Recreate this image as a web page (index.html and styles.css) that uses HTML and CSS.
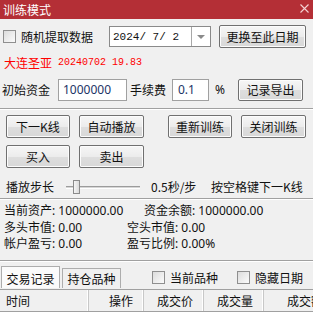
FILE: index.html
```html
<!DOCTYPE html>
<html lang="zh-CN">
<head>
    <meta charset="UTF-8">
    <title>训练模式</title>
    <link rel="stylesheet" href="styles.css">
</head>
<body>
    <div class="window">
        <!-- 标题栏 -->
        <div class="titlebar">
            <span class="title">训练模式</span>
            <svg class="close" width="9" height="9" viewBox="0 0 9 9">
                <path d="M0.5 0.5 L8.5 8.5 M8.5 0.5 L0.5 8.5" stroke="#f4d2d4" stroke-width="1.1" fill="none"/>
            </svg>
        </div>

        <div class="row row-date">
            <label class="check check-wide"><span class="box"></span>随机提取数据</label>
            <div class="combo">
                <span class="combo-text">2024/ 7/ 2</span>
                <span class="combo-arrow"></span>
            </div>
            <button class="btn btn-wide">更换至此日期</button>
        </div>

        <div class="row row-stock">
            <span class="stock-name">大连圣亚</span>
            <span class="stock-info">20240702 19.83</span>
        </div>

        <div class="row row-money">
            <span class="lbl lbl-money">初始资金</span>
            <div class="field field-money">1000000</div>
            <span class="lbl lbl-fee">手续费</span>
            <div class="field field-fee">0.1</div>
            <span class="lbl lbl-pct">%</span>
            <button class="btn btn-export">记录导出</button>
        </div>

        <div class="sep sep-1"></div>

        <div class="row row-btns">
            <button class="btn">下一K线</button>
            <button class="btn">自动播放</button>
            <button class="btn btn-gap">重新训练</button>
            <button class="btn">关闭训练</button>
        </div>
        <div class="row row-btns row-trade">
            <button class="btn">买入</button>
            <button class="btn">卖出</button>
        </div>

        <div class="row row-step">
            <span class="lbl lbl-step">播放步长</span>
            <div class="slider"><span class="track"></span><span class="thumb"></span></div>
            <span class="lbl lbl-speed">0.5秒/步</span>
            <span class="lbl">按空格键下一K线</span>
        </div>

        <div class="sep"></div>

        <div class="info">
            <span>当前资产: 1000000.00</span><span class="info-shift">资金余额: 1000000.00</span>
            <span>多头市值: 0.00</span><span>空头市值: 0.00</span>
            <span>帐户盈亏: 0.00</span><span>盈亏比例: 0.00%</span>
        </div>

        <div class="sep"></div>

        <div class="row row-tabs">
            <div class="tab tab-active">交易记录</div>
            <div class="tab">持仓品种</div>
            <label class="check check-cur"><span class="box"></span>当前品种</label>
            <label class="check"><span class="box"></span>隐藏日期</label>
        </div>

        <div class="grid-head">
            <div class="col col-time">时间</div>
            <div class="col col-op">操作</div>
            <div class="col col-price">成交价</div>
            <div class="col col-vol">成交量</div>
            <div class="col col-amt">成交额</div>
        </div>
        <div class="grid-body"></div>
    </div>
</body>
</html>
```

FILE: styles.css
```css
html, body {
    margin: 0;
    padding: 0;
    width: 313px;
    height: 330px;
    overflow: hidden;
}

body {
    font-family: "Noto Sans", "Noto Sans CJK SC", sans-serif;
    font-size: 12px;
    color: #111;
    background-color: #f0f0f0;
}

.window {
    display: flex;
    flex-direction: column;
    height: 330px;
}

/* 标题栏 */
.titlebar {
    height: 19px;
    background-color: #b42f36;
    color: #fff;
    display: flex;
    align-items: center;
    justify-content: space-between;
    padding: 0 4px 0 3px;
    line-height: 19px;
}

.title {
    font-family: "Noto Sans CJK SC", sans-serif;
    font-size: 12px;
}

.close {
    margin-top: -3px;
}

.row {
    display: flex;
    align-items: center;
    white-space: nowrap;
}

.lbl {
    font-family: "Noto Sans CJK SC", sans-serif;
    line-height: 16px;
}

/* 按钮 */
.btn {
    font-family: "Noto Sans CJK SC", sans-serif;
    font-size: 12px;
    color: #111;
    width: 64px;
    height: 23px;
    padding: 0;
    border: 1px solid #707070;
    border-radius: 2px;
    background: linear-gradient(#f6f6f6 0%, #ececec 50%, #dedede 51%, #d8d8d8 100%);
    box-shadow: inset 0 0 0 1px #fcfcfc;
    line-height: 20px;
}

/* 复选框 */
.check {
    display: flex;
    align-items: center;
    font-family: "Noto Sans CJK SC", sans-serif;
}

.box {
    width: 11px;
    height: 11px;
    border: 1px solid #8f8f8f;
    background: linear-gradient(135deg, #dcdcdc, #fbfbfb);
    margin-right: 5px;
}

.row-date {
    height: 23px;
    margin-top: 6px;
    padding-left: 3px;
}

.check-wide {
    width: 106px;
}

.combo {
    width: 100px;
    height: 19px;
    border: 1px solid #8a8a8a;
    background-color: #fff;
    display: flex;
    align-items: center;
    margin-right: 8px;
}

.combo-text {
    flex: 1;
    padding-left: 3px;
    font-family: "Liberation Mono", monospace;
    font-size: 11px;
}

.combo-arrow {
    width: 18px;
    height: 19px;
    border-left: 1px solid #a8a8a8;
    position: relative;
}

.combo-arrow::after {
    content: "";
    position: absolute;
    left: 5px;
    top: 8px;
    border-left: 4px solid transparent;
    border-right: 4px solid transparent;
    border-top: 4px solid #8a8a8a;
}

.btn-wide {
    width: 87px;
}

.row-stock {
    height: 28px;
    padding-left: 4px;
    color: #ff0000;
}

.stock-name {
    font-family: "Noto Sans CJK SC", sans-serif;
    font-size: 12px;
    width: 54px;
}

.stock-info {
    font-family: "Liberation Mono", monospace;
    font-size: 10px;
}

.row-money {
    height: 23px;
    margin-top: 2px;
    padding-left: 2px;
}

.lbl-money {
    width: 56px;
}

.field {
    border: 1px solid #a0a0a0;
    background-color: #fff;
    color: #1c3466;
    line-height: 20px;
    padding-left: 4px;
    box-sizing: border-box;
    height: 22px;
}

.field-money {
    width: 69px;
}

.lbl-fee {
    width: 42px;
    margin-left: 3px;
}

.field-fee {
    width: 37px;
    padding-left: 5px;
}

.lbl-pct {
    width: 23px;
    margin-left: 6px;
    font-family: "Noto Sans", sans-serif;
}

.btn-export {
    width: 65px;
    height: 22px;
}

/* 分隔线 */
.sep {
    height: 0;
    border-top: 1px solid #a0a0a0;
    border-bottom: 1px solid #fff;
}

.sep-1 {
    margin-top: 7px;
}

.row-btns {
    height: 23px;
    margin-top: 5px;
    padding-left: 6px;
    gap: 9px;
}

.row-btns .btn:nth-child(2),
.row-btns .btn:nth-child(4) {
    width: 65px;
}

.btn-gap {
    margin-left: 15px;
}

.row-trade {
    margin-top: 7px;
}

.row-step {
    height: 22px;
    margin-top: 8px;
    padding-left: 6px;
}

.lbl-step {
    width: 60px;
}

.slider {
    width: 74px;
    height: 14px;
    position: relative;
}

.track {
    position: absolute;
    left: 0;
    right: 0;
    top: 6px;
    height: 1px;
    border-top: 1px solid #9c9c9c;
    border-bottom: 1px solid #fff;
    background-color: #d6d6d6;
}

.thumb {
    position: absolute;
    left: 7px;
    top: 0;
    width: 5px;
    height: 12px;
    border: 1px solid #8a8a8a;
    background: linear-gradient(90deg, #f4f4f4, #dadada);
}

.lbl-speed {
    width: 60px;
    margin-left: 11px;
}

/* 账户信息 */
.info {
    height: 57px;
    padding: 3px 0 0 4px;
    display: grid;
    grid-template-columns: 123px 1fr;
    grid-auto-rows: 16.5px;
    line-height: 16.5px;
    font-family: "Noto Sans", "Noto Sans CJK SC", sans-serif;
    white-space: nowrap;
}

.info-shift {
    padding-left: 17px;
}

.row-tabs {
    height: 22px;
    margin-top: 4px;
    padding-left: 1px;
    align-items: flex-end;
}

.tab {
    font-family: "Noto Sans CJK SC", sans-serif;
    width: 57px;
    height: 19px;
    line-height: 19px;
    text-align: center;
    border: 1px solid #adadad;
    border-bottom: none;
    background-color: #f0f0f0;
    margin-left: 2px;
}

.tab-active {
    height: 21px;
    line-height: 23px;
    background-color: #fbfbfb;
    margin-left: 0;
}

.row-tabs .check {
    align-self: center;
    margin-top: 1px;
}

.check-cur {
    margin-left: 31px;
    width: 85px;
}

/* 表头 */
.grid-head {
    display: flex;
    height: 21px;
    border-top: 1px solid #a0a0a0;
    border-bottom: 1px solid #a0a0a0;
    background-color: #f0f0f0;
    margin-top: 1px;
    overflow: hidden;
}

.col {
    font-family: "Noto Sans CJK SC", sans-serif;
    line-height: 21px;
    border-right: 1px solid #c8c8c8;
    box-shadow: inset -1px 0 0 #fff;
    box-sizing: border-box;
    padding: 0 10px;
    text-align: right;
    flex-shrink: 0;
}

.col-time {
    width: 89px;
    text-align: left;
    padding-left: 6px;
}

.col-op {
    width: 55px;
}

.col-price {
    width: 60px;
}

.col-vol {
    width: 60px;
}

.col-amt {
    width: 70px;
}

.grid-body {
    flex: 1;
    background-color: #fff;
}
```
